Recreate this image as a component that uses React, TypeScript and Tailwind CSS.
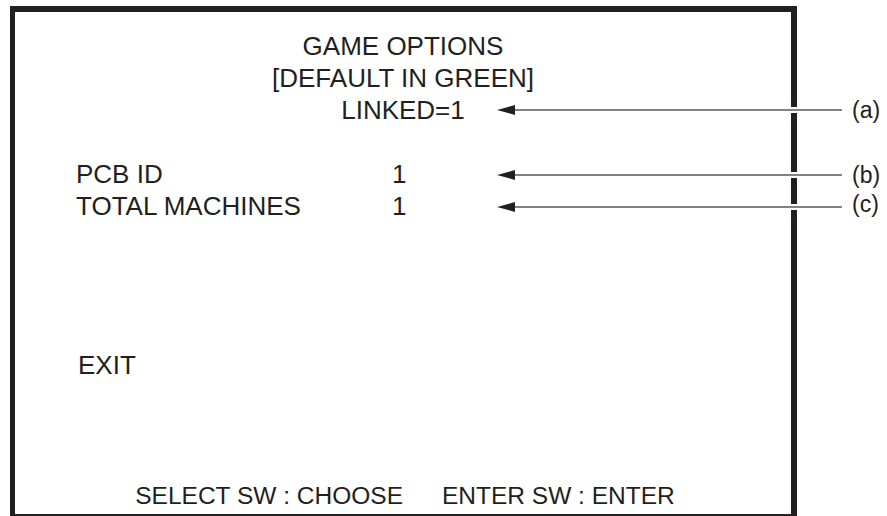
import React from "react";

const ink = "text-[#231f20]";

type Note = { label: string; top: string; labelShift: string };

// annotation arrows pointing back into the screen (lie over the box border)
const notes: Note[] = [
  { label: "(a)", top: "top-[98px]", labelShift: "mt-0" },
  { label: "(b)", top: "top-[163px]", labelShift: "mt-0" },
  { label: "(c)", top: "top-[195px]", labelShift: "-mt-[6px]" },
];

function Arrow() {
  return (
    <svg width="346" height="24" viewBox="0 0 346 24" aria-hidden="true">
      {/* white knock-out where the line crosses the frame */}
      <rect x="290" y="9" width="14" height="6" fill="#ffffff" />
      <line x1="16" y1="12" x2="345" y2="12" stroke="#58595b" strokeWidth="1.6" />
      <polygon points="0,12 18,7 18,17" fill="#231f20" />
    </svg>
  );
}

export default function App() {
  return (
    <div className={`relative w-[887px] h-[516px] overflow-hidden bg-white font-['Liberation_Sans',Arial,sans-serif] ${ink}`}>
      <div className="ml-[10px] mt-[6px] w-[787px] h-[514px] border-[6px] border-l-[5px] border-[#231f20] flex flex-col">
        {/* Header */}
        <div className="pt-[18px] text-center text-[26px] leading-[32px]">
          <p>GAME OPTIONS</p>
          <p>[DEFAULT IN GREEN]</p>
          <p>LINKED=1</p>
        </div>

        {/* Settings */}
        <div className="mt-[32px] pl-[61px] grid grid-cols-[316px_auto] text-[26px] leading-[32px]">
          <span>PCB ID</span>
          <span>1</span>
          <span>TOTAL MACHINES</span>
          <span>1</span>
        </div>

        <p className="mt-[127px] pl-[63px] text-[26px] leading-[32px]">EXIT</p>

        {/* Footer */}
        <div className="mt-[99px] pl-[4px] flex justify-center gap-[39px] text-[24.5px] leading-[32px]">
          <span>SELECT SW : CHOOSE</span>
          <span>ENTER SW : ENTER</span>
        </div>
      </div>

      {notes.map((n) => (
        <div key={n.label} className={`absolute left-[497px] ${n.top} h-[24px] flex items-center`}>
          <Arrow />
          <span className={`ml-[9px] text-[23px] leading-[24px] ${n.labelShift}`}>{n.label}</span>
        </div>
      ))}
    </div>
  );
}
